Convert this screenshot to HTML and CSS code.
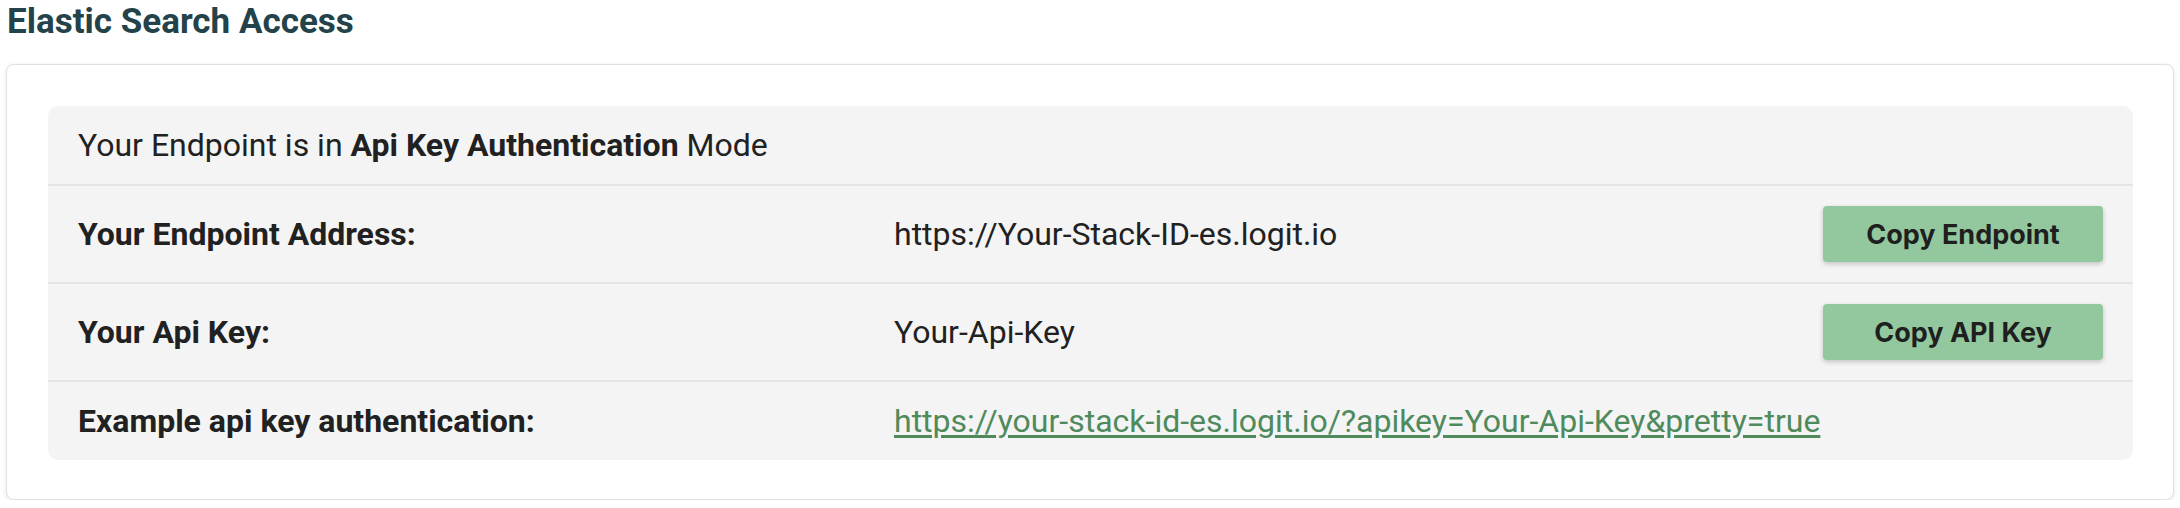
FILE: index.html
```html
<!DOCTYPE html>
<html lang="en">
<head>
<meta charset="utf-8">
<title>Elastic Search Access</title>
<link rel="stylesheet" href="styles.css">
</head>
<body>
<div class="page">
  <h2 class="title">Elastic Search Access</h2>
  <div class="card">
    <div class="panel">
      <div class="row-head">Your Endpoint is in <strong>Api Key Authentication</strong> Mode</div>
      <div class="row">
        <div class="cell label">Your Endpoint Address:</div>
        <div class="cell value">https://Your-Stack-ID-es.logit.io</div>
        <div class="cell action"><button class="btn" type="button">Copy Endpoint</button></div>
      </div>
      <div class="row">
        <div class="cell label">Your Api Key:</div>
        <div class="cell value">Your-Api-Key</div>
        <div class="cell action"><button class="btn" type="button">Copy API Key</button></div>
      </div>
      <div class="row row-last">
        <div class="cell label">Example api key authentication:</div>
        <div class="cell value wide"><a class="link" href="#">https://your-stack-id-es.logit.io/?apikey=Your-Api-Key&amp;pretty=true</a></div>
      </div>
    </div>
  </div>
</div>
</body>
</html>
```

FILE: styles.css
```css
html, body {
  margin: 0;
  padding: 0;
  background: #ffffff;
}

body {
  font-family: Roboto, "Liberation Sans", sans-serif;
  color: #212121;
}

.page {
  padding: 0 6px 0 6px;
}

.title {
  margin: 0;
  padding: 2px 0 0 1px;
  font-size: 35px;
  line-height: 40px;
  font-weight: 700;
  color: #23424a;
  height: 58px;
  box-sizing: border-box;
}

.card {
  margin-top: 6px;
  border: 1px solid #e0e0e0;
  border-radius: 8px;
  box-shadow: 0 1px 4px rgba(0, 0, 0, 0.1);
  padding: 41px 40px 39px 41px;
  background: #ffffff;
}

.panel {
  background: #f4f4f4;
  border-radius: 10px;
  font-size: 32px;
  line-height: 48px;
}

.row-head {
  padding: 15px 30px;
  border-bottom: 2px solid #e4e4e4;
}

.row-head strong {
  font-weight: 700;
}

.row {
  display: grid;
  grid-template-columns: 816px 1fr 340px;
  align-items: center;
  border-bottom: 2px solid #e4e4e4;
}

.row-last {
  border-bottom: none;
}

.cell {
  padding: 15px 30px;
}

.label {
  font-weight: 700;
}

.wide {
  grid-column: span 2;
}

.action {
  padding: 20px 30px;
}

.btn {
  display: block;
  width: 280px;
  height: 56px;
  border: none;
  border-radius: 4px;
  background: #93c89f;
  color: #1f1f1f;
  font-family: Inter, "Liberation Sans", sans-serif;
  font-weight: 700;
  font-size: 27px;
  box-shadow: 0 2px 5px rgba(0, 0, 0, 0.2);
  padding: 0;
  cursor: pointer;
}

.link {
  color: #4f8a5c;
  text-decoration: underline;
  text-underline-offset: 3px;
}
```
